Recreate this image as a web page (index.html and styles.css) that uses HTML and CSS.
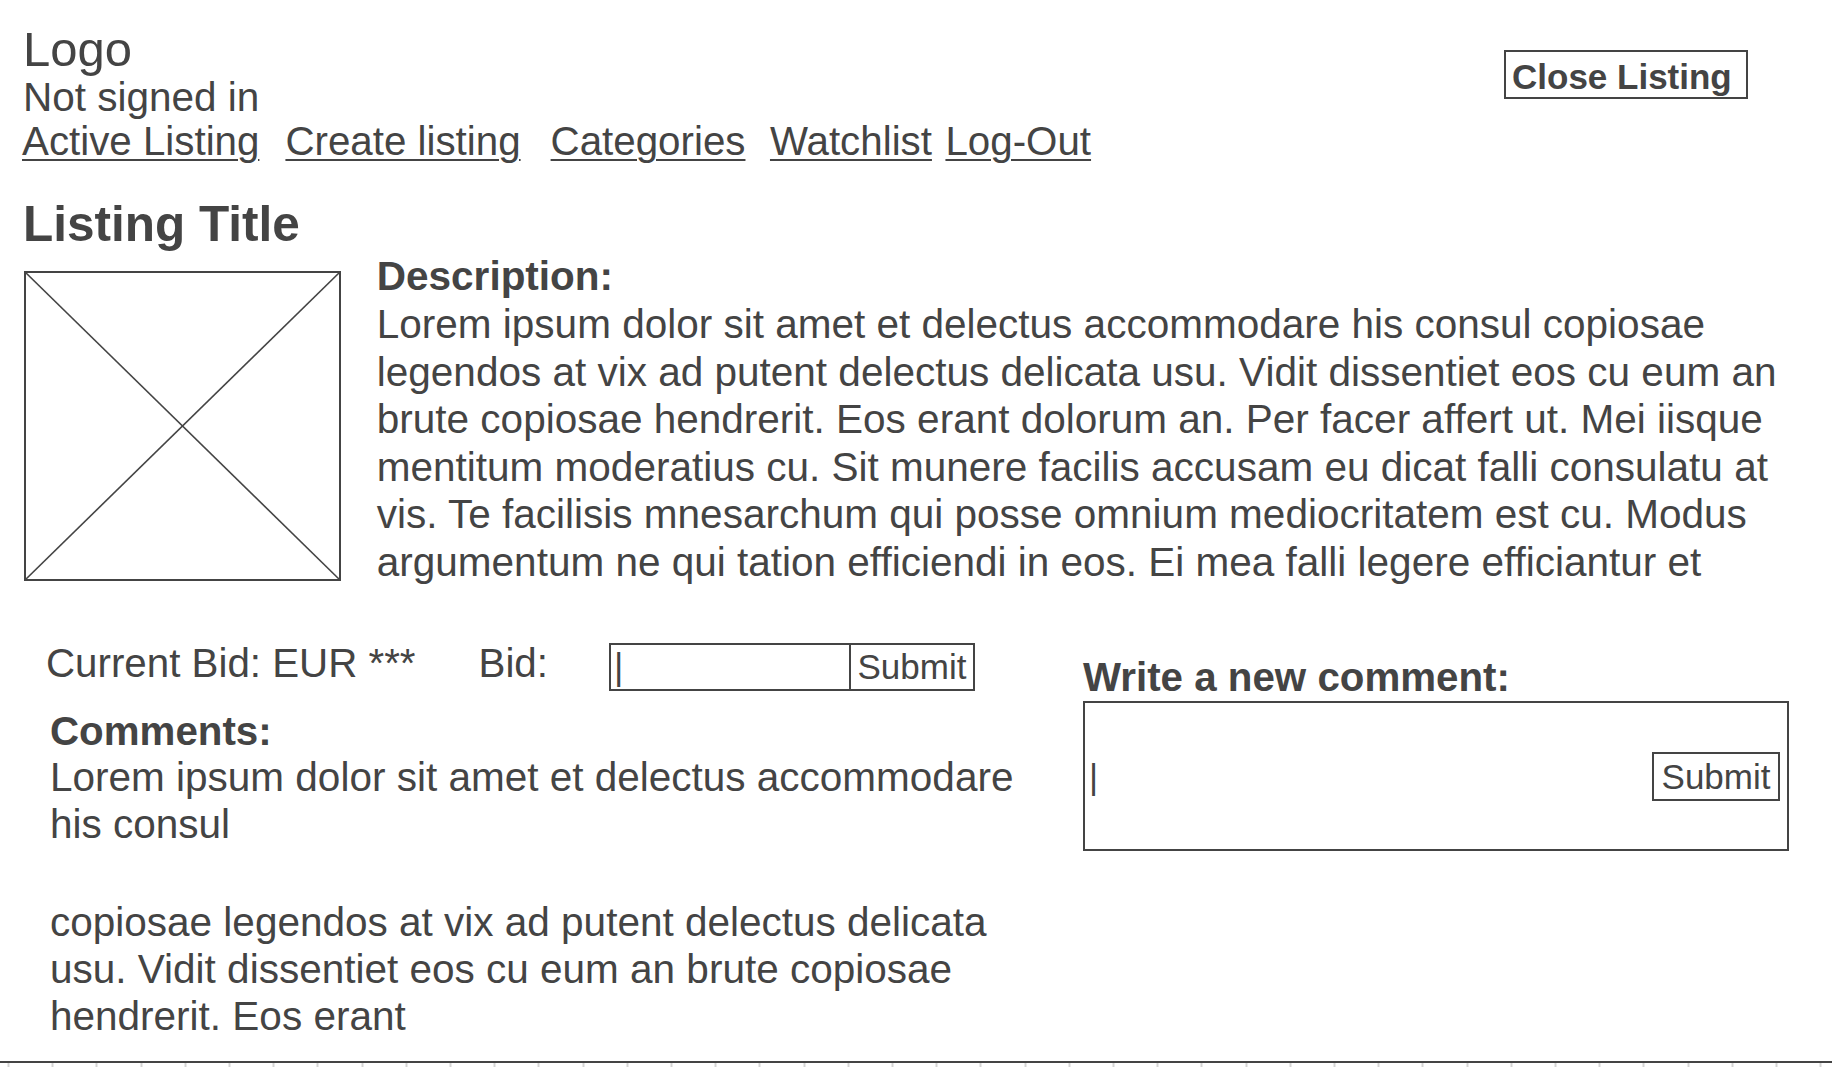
FILE: index.html
```html
<!DOCTYPE html>
<html lang="en">
<head>
<meta charset="utf-8">
<title>Listing</title>
<link rel="stylesheet" href="styles.css">
</head>
<body>
<div class="page">
  <header class="header">
    <div class="brand">
      <div class="logo">Logo</div>
      <div class="status">Not signed in</div>
      <nav class="nav">
        <a class="nav-link nav-active" href="#">Active Listing</a>
        <a class="nav-link nav-create" href="#">Create listing</a>
        <a class="nav-link nav-categories" href="#">Categories</a>
        <a class="nav-link nav-watch" href="#">Watchlist</a>
        <a class="nav-link" href="#">Log-Out</a>
      </nav>
    </div>
    <button class="close-btn" type="button">Close Listing</button>
  </header>

  <h1 class="title">Listing Title</h1>

  <section class="listing">
    <div class="image">
      <svg viewBox="0 0 313 306" preserveAspectRatio="none" aria-hidden="true">
        <line x1="0" y1="0" x2="313" y2="306" stroke="#444" stroke-width="1.6" vector-effect="non-scaling-stroke"/>
        <line x1="313" y1="0" x2="0" y2="306" stroke="#444" stroke-width="1.6" vector-effect="non-scaling-stroke"/>
      </svg>
    </div>
    <div class="desc">
      <h2 class="desc-title">Description:</h2>
      <p class="desc-text">Lorem ipsum dolor sit amet et delectus accommodare his consul copiosae legendos at vix ad putent delectus delicata usu. Vidit dissentiet eos cu eum an brute copiosae hendrerit. Eos erant dolorum an. Per facer affert ut. Mei iisque mentitum moderatius cu. Sit munere facilis accusam eu dicat falli consulatu at vis. Te facilisis mnesarchum qui posse omnium mediocritatem est cu. Modus argumentum ne qui tation efficiendi in eos. Ei mea falli legere efficiantur et</p>
    </div>
  </section>

  <section class="lower">
    <div class="left">
      <div class="bid-row">
        <span class="current">Current Bid: EUR ***</span>
        <span class="bid-label">Bid:</span>
        <div class="bid-input">
          <span class="bid-field">|</span>
          <span class="bid-submit">Submit</span>
        </div>
      </div>
      <div class="comments">
        <h3 class="section-title comments-title">Comments:</h3>
        <p class="comment-text">Lorem ipsum dolor sit amet et delectus accommodare his consul</p>
        <p class="comment-text">copiosae legendos at vix ad putent delectus delicata usu. Vidit dissentiet eos cu eum an brute copiosae hendrerit. Eos erant</p>
      </div>
    </div>
    <div class="right">
      <h3 class="section-title">Write a new comment:</h3>
      <div class="comment-box">
        <span class="comment-cursor">|</span>
        <span class="comment-submit">Submit</span>
      </div>
    </div>
  </section>
</div>
<div class="ruler"></div>
</body>
</html>
```

FILE: styles.css
```css
html, body {
  margin: 0;
  padding: 0;
  overflow: hidden;
  background: #fff;
}

body {
  font-family: "Liberation Sans", Arial, sans-serif;
  color: #444;
}

.page {
  padding: 23px 0 0 21px;
}

.header {
  display: flex;
  justify-content: space-between;
  align-items: flex-start;
  padding-right: 84px;
}

.logo {
  margin-left: 2px;
  font-size: 49px;
  line-height: 52px;
}

.status {
  margin-left: 2px;
  font-size: 40.5px;
  line-height: 45px;
}

.nav {
  display: flex;
  margin-left: 1px;
  font-size: 40.3px;
  line-height: 44px;
}

.nav-link {
  color: #444;
  text-decoration: underline;
  text-decoration-thickness: 2px;
  text-underline-offset: 4px;
}

.nav-active { margin-right: 26px; }
.nav-create { margin-right: 30px; }
.nav-categories { margin-right: 24.5px; }
.nav-watch { margin-right: 13.5px; }

.close-btn {
  display: block;
  box-sizing: border-box;
  width: 244px;
  height: 49px;
  margin-top: 27px;
  padding: 4px 0 0 6px;
  border: 2px solid #444;
  background: #fff;
  color: #444;
  font-family: inherit;
  font-weight: bold;
  font-size: 35px;
  line-height: 41px;
  text-align: left;
}

.title {
  margin: 32px 0 0 2px;
  font-size: 49.5px;
  line-height: 55px;
  font-weight: bold;
}

.listing {
  display: flex;
  align-items: flex-start;
  margin-top: 1px;
}

.image {
  box-sizing: border-box;
  width: 317px;
  height: 310px;
  margin: 19px 0 0 3px;
  border: 2px solid #444;
  flex: 0 0 auto;
}

.image svg {
  display: block;
  width: 100%;
  height: 100%;
}

.desc {
  width: 1428px;
  margin-left: 35.8px;
  font-size: 40.5px;
}

.desc-title {
  margin: 0;
  font-size: 40.5px;
  line-height: 49px;
  font-weight: bold;
}

.desc-text {
  margin: 0;
  line-height: 47.5px;
}

.lower {
  display: flex;
  align-items: flex-start;
  margin-top: 55px;
}

.left {
  flex: 0 0 1062px;
  box-sizing: border-box;
  padding-left: 25px;
}

.bid-row {
  display: flex;
  align-items: flex-start;
  font-size: 40.3px;
  line-height: 46px;
}

.bid-label {
  margin-left: 63px;
}

.bid-input {
  display: flex;
  box-sizing: border-box;
  height: 48px;
  margin: 2px 0 0 61px;
  border: 2px solid #444;
}

.bid-field {
  box-sizing: border-box;
  width: 238px;
  padding-left: 3px;
  font-size: 36px;
  line-height: 44px;
}

.bid-submit {
  box-sizing: border-box;
  width: 124px;
  border-left: 2px solid #444;
  font-size: 35px;
  line-height: 44px;
  text-align: center;
}

.comments {
  width: 985px;
  margin: 18px 0 0 4px;
  font-size: 40.5px;
}

.section-title {
  margin: 0;
  font-size: 40.3px;
  line-height: 47px;
  font-weight: bold;
}

.comments-title {
  line-height: 45px;
}

.comment-text {
  margin: 0;
  line-height: 47.3px;
}

.comment-text + .comment-text {
  margin-top: 50px;
}

.right {
  width: 706px;
  margin-top: 13px;
}

.comment-box {
  display: flex;
  align-items: center;
  justify-content: space-between;
  box-sizing: border-box;
  height: 150px;
  padding: 0 7px 0 4px;
  border: 2px solid #444;
}

.comment-cursor {
  font-size: 35px;
  line-height: 45px;
}

.comment-submit {
  box-sizing: border-box;
  width: 128px;
  height: 49px;
  border: 2px solid #444;
  font-size: 35px;
  line-height: 45px;
  text-align: center;
}

.ruler {
  margin-top: 21px;
  height: 4px;
  border-top: 2px solid #444;
  background-image: repeating-linear-gradient(90deg, #d4d4d4 0 2px, transparent 2px 44.2px);
  background-position: 7.5px 0;
}
```
